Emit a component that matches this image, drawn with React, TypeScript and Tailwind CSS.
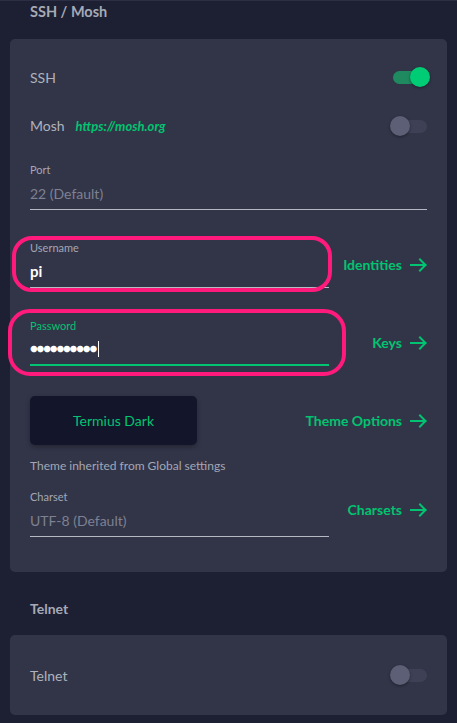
import type { ReactNode } from "react";

const font = { fontFamily: "Lato, 'Open Sans', sans-serif" };

function Arrow() {
  return (
    <svg width="17" height="14" viewBox="0 0 17 14" fill="none" className="ml-2">
      <path
        d="M1 7h14.5M10 1.5l5.5 5.5-5.5 5.5"
        stroke="#00c471"
        strokeWidth="2"
        strokeLinecap="square"
      />
    </svg>
  );
}

function LinkAction({ label }: { label: string }) {
  return (
    <div className="flex items-center text-[14px] font-bold text-[#00c471]">
      {label}
      <Arrow />
    </div>
  );
}

function Toggle({ on }: { on: boolean }) {
  return (
    <div className="relative h-[20px] w-[37px]">
      <div
        className={
          on
            ? "absolute left-[3px] top-[4px] h-[13px] w-[34px] rounded-full bg-[#1f8a5f]"
            : "absolute left-[3px] top-[4px] h-[13px] w-[34px] rounded-full bg-[#3e4155]"
        }
      />
      <div
        className={
          on
            ? "absolute left-[20px] top-0 h-[20px] w-[20px] rounded-full bg-[#00cc75] shadow-[0_1px_3px_rgba(0,0,0,0.4)]"
            : "absolute left-0 top-0 h-[20px] w-[20px] rounded-full bg-[#5c5f75] shadow-[0_1px_3px_rgba(0,0,0,0.4)]"
        }
      />
    </div>
  );
}

function Field({
  label,
  children,
  active,
  width,
}: {
  label: string;
  children: ReactNode;
  active?: boolean;
  width: string;
}) {
  return (
    <div className={width}>
      <div
        className={
          active
            ? "text-[11px] leading-[14px] text-[#00c471]"
            : "text-[11px] leading-[14px] text-[#a3a7b4]"
        }
      >
        {label}
      </div>
      <div className="mt-[6px] flex h-[20px] items-center">{children}</div>
      <div
        className={
          active ? "mt-[5px] h-[2px] bg-[#00c471]" : "mt-[6px] h-px bg-[#b6b9c4]"
        }
      />
    </div>
  );
}

export default function App() {
  return (
    <div
      className="min-h-[723px] w-[457px] border-t border-[#2c2f43] bg-[#1d2033]"
      style={font}
    >
      <div className="pl-[30px] pt-[2px] text-[14.5px] font-bold leading-[18px] text-[#a6aab6]">
        SSH / Mosh
      </div>

      <div className="mx-[10px] mt-[18px] rounded-[5px] bg-[#323548] px-[20px] pb-[35px] pt-[28px]">
        <div className="flex h-[20px] items-center justify-between">
          <span className="text-[14px] text-[#aeb2bd]">SSH</span>
          <Toggle on />
        </div>

        <div className="mt-[29px] flex h-[20px] items-center justify-between">
          <div className="flex items-baseline">
            <span className="text-[14px] text-[#aeb2bd]">Mosh</span>
            <span className="ml-[11px] text-[13px] font-bold italic text-[#00c471]">
              https://mosh.org
            </span>
          </div>
          <Toggle on={false} />
        </div>

        <div className="mt-[27px]">
          <Field label="Port" width="w-full">
            <span className="text-[14px] text-[#7d8192]">22 (Default)</span>
          </Field>
        </div>

        <div className="mt-[31px] flex items-center justify-between">
          <div className="relative">
            <div className="pointer-events-none absolute left-[-18px] top-[-5px] h-[56px] w-[320px] rounded-[20px] border-[4px] border-[#ff1a7c]" />
            <Field label="Username" width="w-[299px]">
              <span className="text-[15px] font-bold text-white">pi</span>
            </Field>
          </div>
          <LinkAction label="Identities" />
        </div>

        <div className="mt-[31px] flex items-center justify-between">
          <div className="relative">
            <div className="pointer-events-none absolute left-[-22px] top-[-10px] h-[67px] w-[338px] rounded-[22px] border-[4px] border-[#ff1a7c]" />
            <Field label="Password" width="w-[299px]" active>
              <span className="text-[13px] font-bold tracking-[-1.2px] text-white">
                ●●●●●●●●●●
              </span>
              <span className="ml-[2px] h-[16px] w-px bg-white" />
            </Field>
          </div>
          <LinkAction label="Keys" />
        </div>

        <div className="mt-[30px] flex items-center justify-between">
          <div className="flex h-[49px] w-[167px] items-center justify-center rounded-[5px] bg-[#13162a] text-[14px] text-[#00c471] shadow-[0_2px_5px_rgba(0,0,0,0.3)]">
            Termius Dark
          </div>
          <LinkAction label="Theme Options" />
        </div>

        <div className="mt-[12px] text-[12px] text-[#a3a7b4]">
          Theme inherited from Global settings
        </div>

        <div className="mt-[15px] flex items-center justify-between">
          <Field label="Charset" width="w-[299px]">
            <span className="text-[14px] text-[#7d8192]">UTF-8 (Default)</span>
          </Field>
          <div className="pb-[8px]">
            <LinkAction label="Charsets" />
          </div>
        </div>
      </div>

      <div className="pl-[30px] pt-[28px] text-[14px] font-bold leading-[18px] text-[#a6aab6]">
        Telnet
      </div>

      <div className="mx-[10px] mt-[17px] flex h-[80px] items-center justify-between rounded-[5px] bg-[#323548] pl-[20px] pr-[20px]">
        <span className="text-[14px] text-[#aeb2bd]">Telnet</span>
        <Toggle on={false} />
      </div>
    </div>
  );
}
